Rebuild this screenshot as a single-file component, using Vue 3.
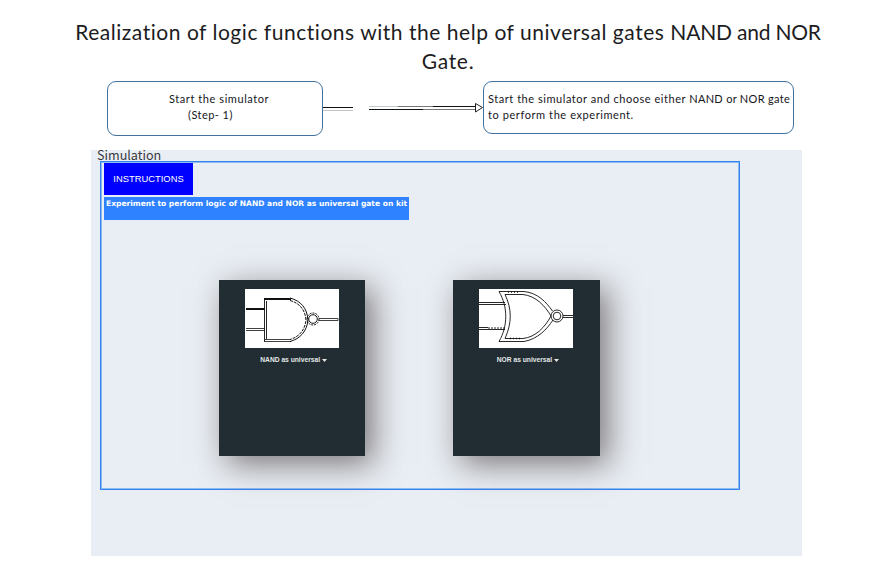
<script setup>
const gates = [
  { id: 'nand', label: 'NAND as universal' },
  { id: 'nor', label: 'NOR as universal' },
]
</script>

<template>
  <main class="page">
    <h1 class="title"><span class="title-first">Realization of logic functions with the help of universal gates <span class="title-caps">NAND and NOR</span></span><br><span class="title-second">Gate.</span></h1>

    <section class="flow">
      <div class="step step-one">
        <span class="s1">Start the simulator</span>
        <span class="s2">(Step- 1)</span>
      </div>
      <svg class="connector" width="160" height="20" viewBox="0 0 160 20" fill="none">
        <path d="M0 7.5H30" stroke="#111118" />
        <path d="M0 10.5H30" stroke="#c4c4c4" />
        <path d="M46 6.5H75" stroke="#c4cccc" />
        <path d="M75 6.5H110" stroke="#777" />
        <path d="M110 6.5H152" stroke="#111118" />
        <path d="M46 9.5H100" stroke="#111118" />
        <path d="M100 9.5H152" stroke="#777" />
        <path d="M152.5 3.5V12L159.5 7.5Z" stroke="#222" fill="#fff" />
      </svg>
      <div class="step step-two">
        <span class="t1">Start the simulator and choose either <span class="t1-caps">NAND or NOR gate</span></span>
        <span class="t2">to perform the experiment.</span>
      </div>
    </section>

    <section class="panel">
      <h2 class="heading">Simulation</h2>
      <div class="frame">
        <button class="instructions">INSTRUCTIONS</button>
        <div class="banner"><span>Experiment to perform logic of NAND and NOR as universal gate on kit</span></div>
        <div class="cards">
          <article v-for="gate in gates" :key="gate.id" class="card">
            <svg v-if="gate.id === 'nand'" class="symbol" width="94" height="59" viewBox="0 0 94 59" fill="none">
              <g stroke="#111">
                <path d="M1 20H20" stroke-width="2" />
                <path d="M1 39.5H20M1 41.5H20" stroke-width=".8" />
                <path d="M19.5 10V52.5M21.5 12V50" stroke-width=".9" />
                <path d="M19 10H46" stroke-width="2" />
                <path d="M20 50.5H45M19 52.5H46" stroke-width=".8" />
                <path d="M45 9C56 12 62 19 63 31C62 42 55 50 45 52.5" />
                <path d="M45 11.5C54 14 60 20 61 31C60 41 54 48 45 50.5" stroke-dasharray="3 1" />
                <circle cx="68" cy="30" r="6" stroke-dasharray="2 1" />
                <circle cx="68" cy="30" r="4.3" />
                <path d="M74 29.5H93M74 31.5H93V29.5" stroke-width=".8" />
              </g>
            </svg>
            <svg v-else class="symbol" width="94" height="59" viewBox="0 0 94 59" fill="none">
              <g stroke="#111" stroke-width=".9">
                <path d="M0 13.5H26M0 15.5H27" />
                <path d="M0 38.5H9" />
                <path d="M9 39H27" stroke-dasharray="2 1" />
                <path d="M0 40.5H26" />
                <path d="M20 2.5H45C59 4 67 13 73.5 22M20 2.5C29 18 29 37 20 52.5H45C59 50 68 40 74 31" />
                <path d="M26 5.5H44C57 7 66 17 72 27C66 38 57 48 44 49.5H26C33 34 33 20 26 5.5Z" />
                <path d="M29 3H41M31 49.5H41" stroke-dasharray="1 2" stroke-width="1.4" />
                <circle cx="78" cy="27" r="6" />
                <circle cx="78" cy="27" r="3.8" />
                <path d="M84 26.5H94M84 28.5H94" />
              </g>
            </svg>
            <div class="label">
              <span>{{ gate.label }}</span>
              <svg width="5" height="3" viewBox="0 0 5 3"><path d="M0 0H5L2.5 3Z" fill="#e4e8e8" /></svg>
            </div>
          </article>
        </div>
      </div>
    </section>
  </main>
</template>

<style>
body {
  background: #fff;
}
</style>

<style scoped>
.page {
  box-sizing: border-box;
  width: 884px;
  height: 569px;
  padding-top: 17px;
  overflow: hidden;
  background: #fff;
}
.title {
  margin: 0;
  padding-left: 12px;
  text-align: center;
  font: 400 21px/29px Lato, sans-serif;
  color: #1c1c22;
  white-space: nowrap;
}
.title-first {
  letter-spacing: 0.53px;
}
.title-caps {
  letter-spacing: -0.2px;
}
.title-second {
  letter-spacing: 0.7px;
}
.flow {
  display: flex;
  align-items: flex-start;
  height: 70px;
  padding: 6px 0 0 107px;
  box-sizing: border-box;
}
.step {
  box-sizing: border-box;
  display: flex;
  flex-direction: column;
  border: 1px solid #41719c;
  border-radius: 9px;
  font: 400 11px/16px Lato, sans-serif;
  color: #15151c;
  white-space: nowrap;
}
.step-one {
  width: 216px;
  height: 55px;
  padding: 9px 0 0 61px;
  letter-spacing: 0.57px;
}
.s2 {
  padding-left: 19px;
  letter-spacing: 0.45px;
}
.step-two {
  width: 311px;
  height: 53px;
  padding: 9px 0 0 4px;
  letter-spacing: 0.54px;
}
.t1-caps {
  letter-spacing: 0.3px;
}
.t2 {
  letter-spacing: 0.58px;
}
.connector {
  display: block;
  margin-top: 19px;
}
.panel {
  box-sizing: border-box;
  width: 711px;
  height: 406px;
  margin: 5px 0 0 91px;
  padding-left: 9px;
  background: #e9eef4;
}
.heading {
  height: 11px;
  margin: 0 0 0 -3px;
  font: 400 12.6px/10px "Noto Sans CJK SC", sans-serif;
  color: #38383c;
}
.frame {
  box-sizing: border-box;
  width: 640px;
  height: 329px;
  padding: 1px 0 0 3px;
  border: 1px solid #3584ee;
  box-shadow: inset 0 0 0 1px #8dbaf3;
}
.instructions {
  display: block;
  width: 89px;
  height: 32px;
  padding: 0;
  border: 0;
  background: #0000fe;
  color: #fff;
  font: 400 9.4px/32px "Liberation Sans", sans-serif;
}
.banner {
  width: 305px;
  height: 23px;
  margin-top: 2px;
  padding-left: 2px;
  box-sizing: border-box;
  background: #2f82ff;
  color: #fff;
  font: 700 7.55px/13px "DejaVu Sans", sans-serif;
  white-space: nowrap;
}
.cards {
  display: flex;
  gap: 88px;
  padding: 60px 0 0 115px;
}
.card {
  box-sizing: border-box;
  width: 146.3px;
  height: 176px;
  padding-top: 9px;
  display: flex;
  flex-direction: column;
  align-items: center;
  background: #212d32;
  box-shadow: 8px 8px 30px rgba(65, 55, 55, 0.65);
}
.symbol {
  display: block;
  background: #fff;
}
.label {
  display: flex;
  align-items: center;
  gap: 2px;
  margin: 6px 0 0 3px;
  color: #e4e8e8;
  font: 700 6.7px/12px "Liberation Sans", sans-serif;
}
</style>
